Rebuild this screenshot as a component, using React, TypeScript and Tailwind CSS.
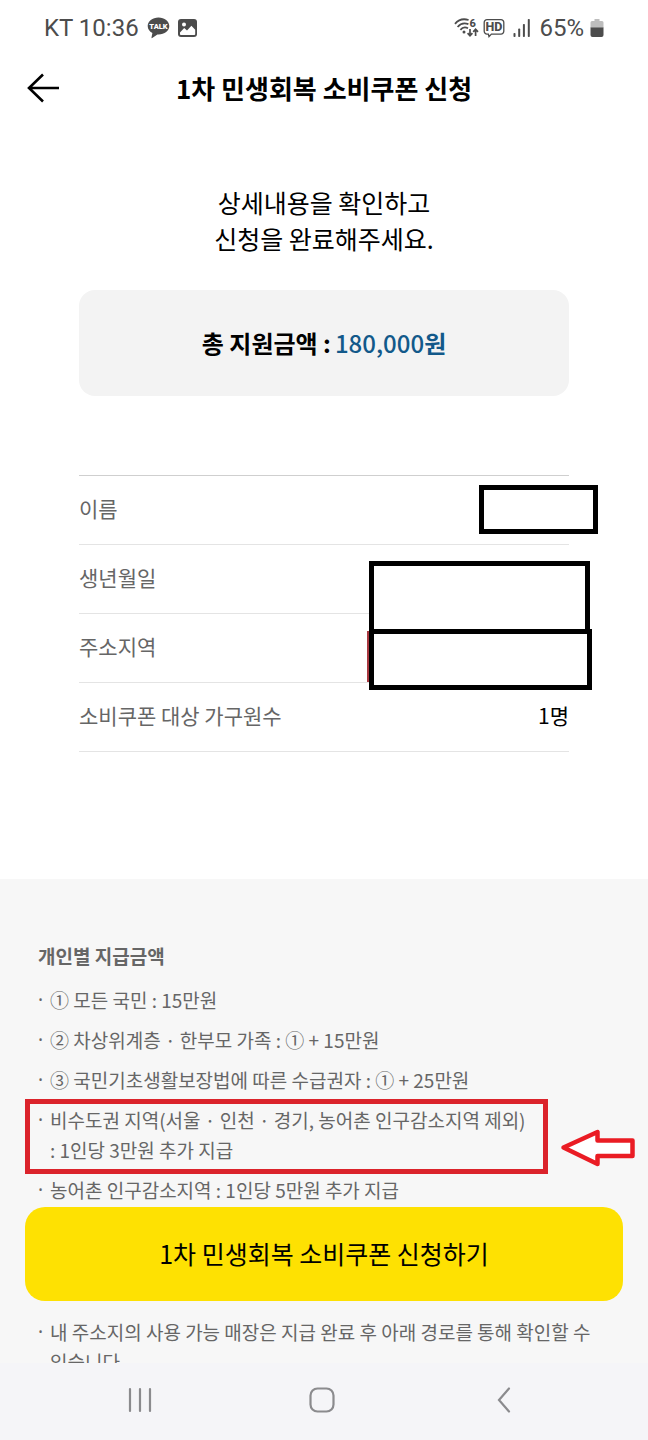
import type { ReactNode } from "react";

function WifiIcon() {
  return (
    <svg width="25" height="20" viewBox="0 0 25 20" fill="none" stroke="#4c4c4c" aria-hidden="true">
      <path d="M1 5.8C4.400 1.800 9.400 .4 14.600 2" strokeWidth="1.800" />
      <path d="M3.600 9C6.400 5.600 10.600 4.800 14.400 6.200" strokeWidth="1.800" />
      <path d="M6.400 11.800C8.400 9.400 11.400 9 14 10.200" strokeWidth="1.800" />
      <circle cx="10" cy="14" r="1.500" fill="#4c4c4c" stroke="none" />
      <path d="M16 11v6.400M13.600 15.200l2.400 2.600 2.400-2.600M21.600 18v-6.400M19.200 13.800l2.400-2.600 2.400 2.600" strokeWidth="1.700" />
      <text x="15.400" y="8.800" fontSize="11" fontWeight="800" fontFamily="Roboto, sans-serif" fill="#4c4c4c" stroke="none">
        6
      </text>
    </svg>
  );
}

function HdIcon() {
  return (
    <svg width="22" height="20" viewBox="0 0 22 20" fill="none" aria-hidden="true">
      <path
        d="M4 1.700h14a2.800 2.800 0 0 1 2.800 2.800v8.800a2.800 2.800 0 0 1-2.800 2.800H8.400L6 18.600l-.6-2.500H4a2.800 2.800 0 0 1-2.800-2.800V4.500A2.800 2.800 0 0 1 4 1.700z"
        stroke="#4c4c4c"
        strokeWidth="1.300"
      />
      <text x="11" y="13.400" fontSize="12.500" fontWeight="800" textAnchor="middle" fontFamily="Roboto, sans-serif" fill="#4c4c4c">
        HD
      </text>
    </svg>
  );
}

function SignalIcon() {
  return (
    <svg width="18" height="18" viewBox="0 0 18 18" fill="#4c4c4c" aria-hidden="true">
      <rect x="0.500" y="14" width="2" height="4" rx="0.800" />
      <rect x="5.200" y="9.500" width="2" height="8.500" rx="0.800" />
      <rect x="9.900" y="5" width="2" height="13" rx="0.800" />
      <rect x="14.800" y="0" width="2" height="18" rx="0.800" />
    </svg>
  );
}

function BatteryIcon() {
  return (
    <svg width="14" height="18" viewBox="0 0 14 18" aria-hidden="true">
      <path d="M4.500 0h5v2H12a1.500 1.500 0 0 1 1.500 1.500V9H.5V3.500A1.500 1.500 0 0 1 2 2h2.500z" fill="#bdbdbd" />
      <path d="M.5 8.500h13V16a2 2 0 0 1-2 2h-9a2 2 0 0 1-2-2z" fill="#4c4c4c" />
    </svg>
  );
}

function TalkIcon() {
  return (
    <svg width="23" height="22" viewBox="0 0 23 22" aria-hidden="true">
      <path
        d="M11.500 .5C5.400 .5 .7 4.200 .7 9c0 3 1.800 5.600 4.700 7.100L4.500 20.600c-.1 .5 .3 .7 .7 .4l5.200-3.600h1.100c6.100 0 10.800-3.700 10.800-8.400S17.600 .5 11.500 .5z"
        fill="#4c4c4c"
      />
      <text x="11.500" y="11.800" fontSize="7.500" fontWeight="900" textAnchor="middle" fontFamily="Roboto, sans-serif" fill="#fff">
        TALK
      </text>
    </svg>
  );
}

function PictureIcon() {
  return (
    <svg width="19" height="18" viewBox="0 0 19 18" aria-hidden="true">
      <rect width="19" height="18" rx="3" fill="#4c4c4c" />
      <circle cx="6" cy="5.500" r="2" fill="#fff" />
      <path d="M2 13.500l4.200-4.600 2.800 2.600 4.400-4.700 3.800 4v4.100c0 .6-.5 1.100-1.100 1.100H3.100c-.6 0-1.100-.5-1.100-1.100z" fill="#fff" />
    </svg>
  );
}

function StatusBar() {
  return (
    <div className="flex h-14 shrink-0 items-center justify-between px-11 font-['Roboto',sans-serif] text-2xl leading-7 text-[#4c4c4c]">
      <div className="flex items-center gap-2">
        <span>KT 10:36</span>
        <TalkIcon />
        <PictureIcon />
      </div>
      <div className="flex items-center gap-1">
        <WifiIcon />
        <HdIcon />
        <span className="px-1">
          <SignalIcon />
        </span>
        <span className="pr-0.5">65%</span>
        <BatteryIcon />
      </div>
    </div>
  );
}

function Row({ label, children }: { label: string; children?: ReactNode }) {
  return (
    <tr>
      <th scope="row" className="h-[69px] border-b border-[#e4e4e4] p-0 pb-1 text-left font-normal text-[#666]">
        {label}
      </th>
      <td className="relative h-[69px] border-b border-[#e4e4e4] p-0 pb-1 text-right text-black">{children}</td>
    </tr>
  );
}

function Bullet({ children }: { children: ReactNode }) {
  return (
    <li className="relative flex">
      <span className="w-3 shrink-0 font-['Noto_Sans',sans-serif]">·</span>
      <div className="min-w-0 flex-1">{children}</div>
    </li>
  );
}

export default function App() {
  return (
    <div className="flex h-screen flex-col overflow-hidden bg-white font-['Noto_Sans_CJK_KR',sans-serif] break-keep text-black">
      <StatusBar />
      <header className="grid h-16 shrink-0 grid-cols-[64px_1fr_64px] items-center pb-px">
        <button type="button" aria-label="뒤로" className="flex justify-end pr-1">
          <svg width="34" height="30" viewBox="0 0 34 30" fill="none" stroke="#000" strokeWidth="2.600" aria-hidden="true">
            <path d="M33 15H3M17 1.500L3 15l14 13.500" />
          </svg>
        </button>
        <h1 className="text-center text-[26px] leading-9 font-bold">1차 민생회복 소비쿠폰 신청</h1>
      </header>

      <div className="relative min-h-0 flex-1">
        <main className="flex h-full flex-col overflow-y-auto [scrollbar-width:none]">
          <section className="shrink-0 px-[79px] pt-16 pb-[127px]">
            <p className="text-center text-[25px] leading-9">
              상세내용을 확인하고
              <br />
              신청을 완료해주세요.
            </p>
            <p className="mt-[34px] flex h-[106px] items-center justify-center gap-1 rounded-2xl bg-[#f3f3f3] text-2xl font-bold">
              <span>총 지원금액 :</span>
              <span className="text-[#12598a]">
                <span className="font-medium">180,000</span>원
              </span>
            </p>
            <table className="mt-[79px] w-full border-separate border-spacing-0 border-t border-[#cfcfcf] text-[21px] leading-8">
              <tbody>
                <Row label="이름">
                  <span className="absolute top-[9px] -right-[29px] h-[49px] w-[119px] border-5 border-black bg-white" />
                </Row>
                <Row label="생년월일">
                  <span className="absolute top-4 -right-[21px] h-[73px] w-[221px] border-5 border-black bg-white" />
                </Row>
                <Row label="주소지역">
                  <span className="absolute top-[17px] right-[200px] h-[51px] w-0.5 bg-[#a8383f]" />
                  <span className="absolute top-[15px] -right-[23px] h-[61px] w-[223px] border-5 border-black bg-white" />
                </Row>
                <Row label="소비쿠폰 대상 가구원수">1명</Row>
              </tbody>
            </table>
          </section>

          <section className="grow bg-[#f7f7f7] px-[38px] pt-[62px] text-[19px] leading-[30px] text-[#666]">
            <h2 className="font-bold">개인별 지급금액</h2>
            <ul className="mt-[14px] flex flex-col gap-[10px]">
              <Bullet>① 모든 국민 : 15만원</Bullet>
              <Bullet>② 차상위계층 · 한부모 가족 : ① + 15만원</Bullet>
              <Bullet>③ 국민기초생활보장법에 따른 수급권자 : ① + 25만원</Bullet>
              <Bullet>
                비수도권 지역(서울 · 인천 · 경기, 농어촌 인구감소지역 제외)
                <br />: 1인당 3만원 추가 지급
                <span className="absolute -top-[6px] -left-[13px] h-[75px] w-[523px] border-5 border-[#db232b]" />
                <svg
                  className="absolute top-6 left-[522px]"
                  width="77"
                  height="38"
                  viewBox="0 0 77 38"
                  fill="#fff"
                  stroke="#ea1c24"
                  strokeWidth="4.500"
                  strokeLinejoin="round"
                  aria-hidden="true"
                >
                  <path d="M3.500 18.500L37.500 3v8.500h35V27h-35v8z" />
                </svg>
              </Bullet>
              <Bullet>농어촌 인구감소지역 : 1인당 5만원 추가 지급</Bullet>
            </ul>
            <ul className="mt-28">
              <Bullet>내 주소지의 사용 가능 매장은 지급 완료 후 아래 경로를 통해 확인할 수 있습니다.</Bullet>
            </ul>
          </section>
        </main>
        <button
          type="button"
          className="absolute inset-x-[25px] bottom-[62px] h-[94px] rounded-[20px] bg-[#fee102] text-[25px] text-black"
        >
          1차 민생회복 소비쿠폰 신청하기
        </button>
      </div>

      <nav className="flex h-[77px] shrink-0 items-center justify-between bg-[#f5f5f8] pr-[132px] pb-1 pl-[127px]">
        <button type="button" aria-label="최근 앱">
          <svg width="26" height="26" viewBox="0 0 26 26" stroke="#8b8b8e" strokeWidth="2.200" strokeLinecap="round" aria-hidden="true">
            <path d="M3 2v22M13 2v22M23 2v22" />
          </svg>
        </button>
        <button type="button" aria-label="홈">
          <svg width="26" height="26" viewBox="0 0 26 26" fill="none" stroke="#8b8b8e" strokeWidth="2.200" aria-hidden="true">
            <rect x="1.500" y="1.500" width="23" height="23" rx="7" />
          </svg>
        </button>
        <button type="button" aria-label="이전">
          <svg width="26" height="26" viewBox="0 0 26 26" fill="none" stroke="#8b8b8e" strokeWidth="2.200" strokeLinecap="round" aria-hidden="true">
            <path d="M19 1.500L9 13l10 11.500" />
          </svg>
        </button>
      </nav>
    </div>
  );
}
